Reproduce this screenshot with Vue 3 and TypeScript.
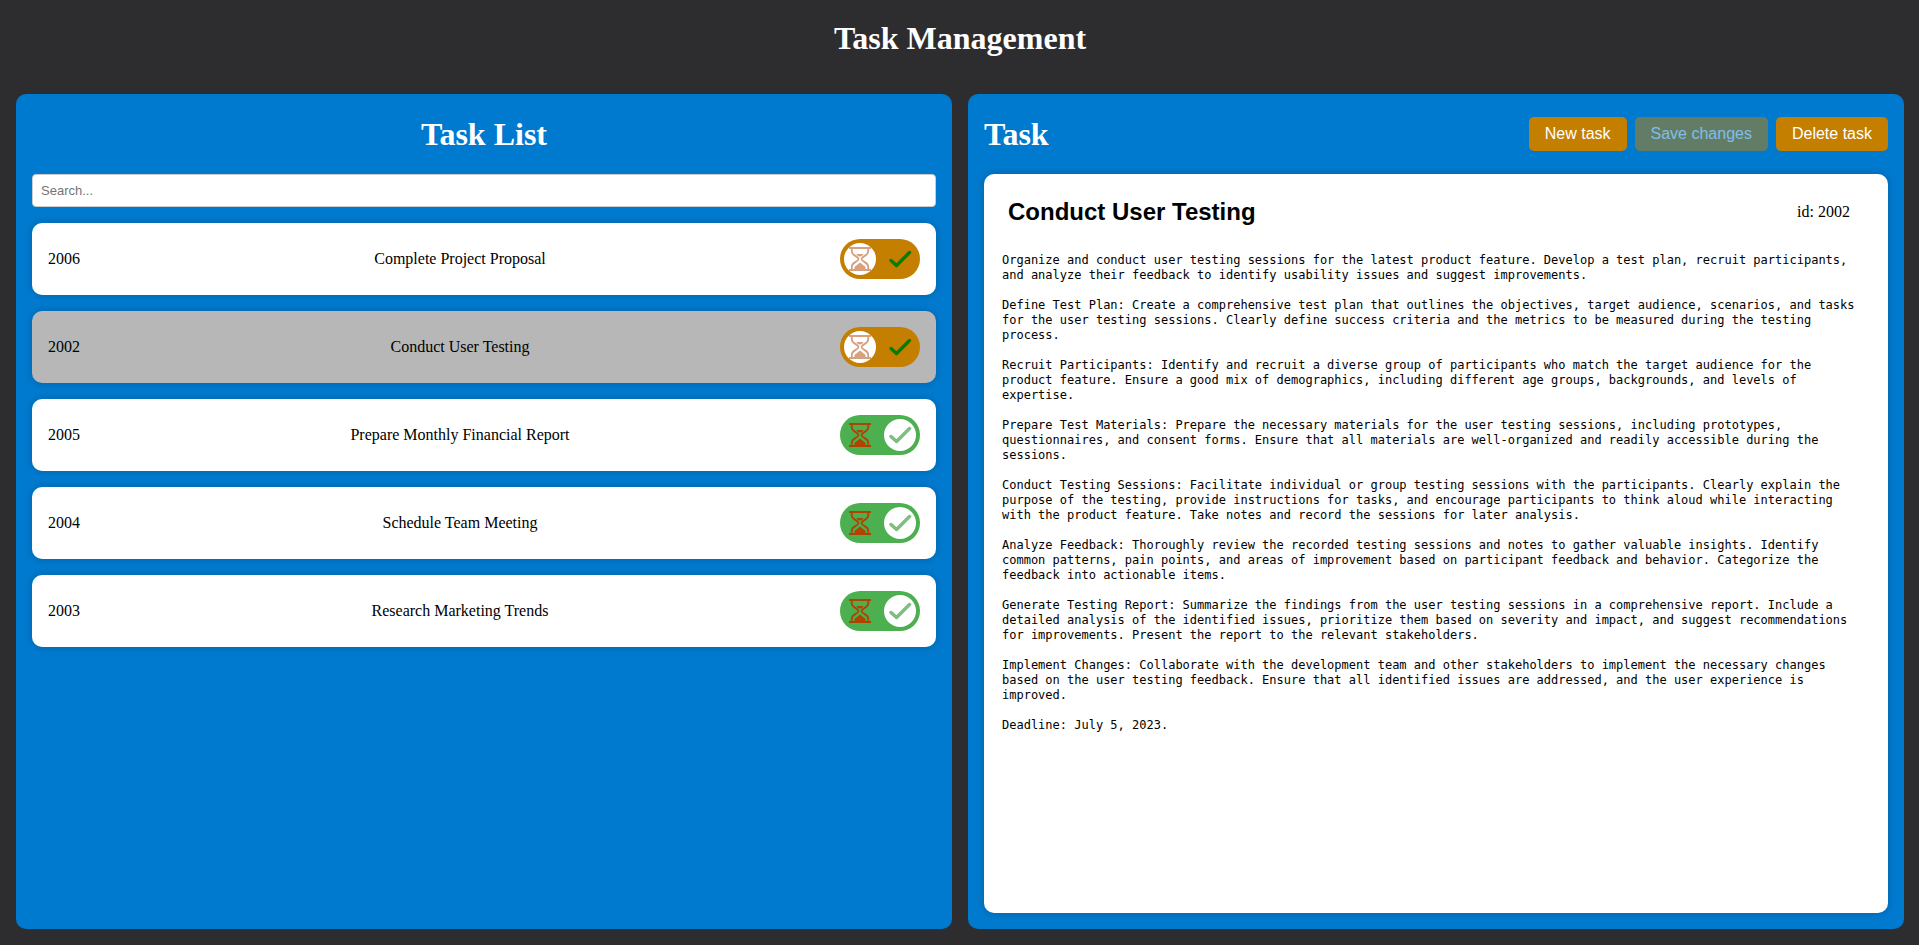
<script setup lang="ts">
import { computed, ref } from 'vue'

interface Task {
  id: number
  title: string
  done: boolean
  description: string
}

const tasks = ref<Task[]>([
  { id: 2006, title: 'Complete Project Proposal', done: false, description: '' },
  {
    id: 2002,
    title: 'Conduct User Testing',
    done: false,
    description: [
      'Organize and conduct user testing sessions for the latest product feature. Develop a test plan, recruit participants, and analyze their feedback to identify usability issues and suggest improvements.',
      'Define Test Plan: Create a comprehensive test plan that outlines the objectives, target audience, scenarios, and tasks for the user testing sessions. Clearly define success criteria and the metrics to be measured during the testing process.',
      'Recruit Participants: Identify and recruit a diverse group of participants who match the target audience for the product feature. Ensure a good mix of demographics, including different age groups, backgrounds, and levels of expertise.',
      'Prepare Test Materials: Prepare the necessary materials for the user testing sessions, including prototypes, questionnaires, and consent forms. Ensure that all materials are well-organized and readily accessible during the sessions.',
      'Conduct Testing Sessions: Facilitate individual or group testing sessions with the participants. Clearly explain the purpose of the testing, provide instructions for tasks, and encourage participants to think aloud while interacting with the product feature. Take notes and record the sessions for later analysis.',
      'Analyze Feedback: Thoroughly review the recorded testing sessions and notes to gather valuable insights. Identify common patterns, pain points, and areas of improvement based on participant feedback and behavior. Categorize the feedback into actionable items.',
      'Generate Testing Report: Summarize the findings from the user testing sessions in a comprehensive report. Include a detailed analysis of the identified issues, prioritize them based on severity and impact, and suggest recommendations for improvements. Present the report to the relevant stakeholders.',
      'Implement Changes: Collaborate with the development team and other stakeholders to implement the necessary changes based on the user testing feedback. Ensure that all identified issues are addressed, and the user experience is improved.',
      'Deadline: July 5, 2023.',
    ].join('\n\n'),
  },
  { id: 2005, title: 'Prepare Monthly Financial Report', done: true, description: '' },
  { id: 2004, title: 'Schedule Team Meeting', done: true, description: '' },
  { id: 2003, title: 'Research Marketing Trends', done: true, description: '' },
])

const search = ref('')
const selectedId = ref(2002)
const changed = ref(false)

const visibleTasks = computed(() =>
  tasks.value.filter((t) => t.title.toLowerCase().includes(search.value.toLowerCase())),
)
const selected = computed(() => tasks.value.find((t) => t.id === selectedId.value))

function select(id: number) {
  selectedId.value = id
  changed.value = false
}

function addTask() {
  const id = Math.max(2000, ...tasks.value.map((t) => t.id)) + 1
  tasks.value.unshift({ id, title: 'New task', done: false, description: '' })
  select(id)
}

function deleteTask() {
  tasks.value = tasks.value.filter((t) => t.id !== selectedId.value)
  if (tasks.value.length) select(tasks.value[0].id)
}
</script>

<template>
  <div class="app">
    <header class="app-header">
      <h1>Task Management</h1>
    </header>
    <main class="panels">
      <section class="panel">
        <div class="panel-header centered">
          <h2>Task List</h2>
        </div>
        <input v-model="search" class="search" type="search" placeholder="Search..." aria-label="Search tasks" />
        <ul class="task-list">
          <li
            v-for="task in visibleTasks"
            :key="task.id"
            class="task-card"
            :class="{ selected: task.id === selectedId }"
            @click="select(task.id)"
          >
            <span>{{ task.id }}</span>
            <span>{{ task.title }}</span>
            <label class="switch" @click.stop>
              <input v-model="task.done" type="checkbox" :aria-label="`${task.title} done`" />
              <span class="knob"></span>
              <svg class="icon hourglass" viewBox="0 0 24 24" aria-hidden="true">
                <path
                  d="M1 1h22M1 23h22M3.800 1v3.500c0 4.500 6.700 4.500 6.700 7.500s-6.700 3-6.700 7.500V23M20.200 1v3.500c0 4.500-6.700 4.500-6.700 7.500s6.700 3 6.700 7.500V23"
                  fill="none"
                  stroke="currentColor"
                  stroke-width="1.800"
                />
                <path d="M8.500 7h7q-1 2.200-3.500 2.500T8.500 7zM12 15.500l5.500 4.500v2.500h-11V20z" fill="currentColor" />
              </svg>
              <svg class="icon check" viewBox="0 0 24 24" aria-hidden="true">
                <path
                  d="M3 13.500l5.500 5L21.500 5.500"
                  fill="none"
                  stroke="currentColor"
                  stroke-width="3.400"
                  stroke-linecap="round"
                  stroke-linejoin="round"
                />
              </svg>
            </label>
          </li>
        </ul>
      </section>

      <section class="panel">
        <div class="panel-header">
          <h2>Task</h2>
          <div class="actions">
            <button type="button" @click="addTask">New task</button>
            <button type="button" :disabled="!changed" @click="changed = false">Save changes</button>
            <button type="button" @click="deleteTask">Delete task</button>
          </div>
        </div>
        <article v-if="selected" class="detail">
          <div class="detail-header">
            <input v-model="selected.title" class="detail-title" type="text" aria-label="Task title" @input="changed = true" />
            <span class="detail-id">id: {{ selected.id }}</span>
          </div>
          <textarea
            v-model="selected.description"
            class="description"
            aria-label="Task description"
            spellcheck="false"
            @input="changed = true"
          ></textarea>
        </article>
      </section>
    </main>
  </div>
</template>

<style>
body {
  margin: 0;
  background: #2d2d2f;
}
</style>

<style scoped>
.app,
.app * {
  box-sizing: border-box;
}
.app {
  display: flex;
  flex-direction: column;
  min-height: 100vh;
  padding: 16px 15px 16px 16px;
  background: #2d2d2f;
  color: #000;
  font: 16px/20px "Liberation Serif", "Times New Roman", serif;
}
h1,
h2 {
  margin: 0;
  color: #fff;
  font-size: 32px;
  line-height: 44px;
  font-weight: bold;
}
.app-header {
  padding-bottom: 34px;
  text-align: center;
}
.panels {
  flex: 1;
  display: grid;
  grid-template-columns: minmax(0, 1fr) minmax(0, 1fr);
  gap: 16px;
}
.panel {
  display: flex;
  flex-direction: column;
  padding: 0 16px 16px;
  border-radius: 10px;
  background: #007acf;
}
.panel-header {
  display: flex;
  align-items: center;
  justify-content: space-between;
  height: 80px;
}
.centered {
  justify-content: center;
}
.search {
  appearance: none;
  width: 100%;
  margin: 0;
  padding: 8px;
  border: 1px solid #ccc;
  border-radius: 4px;
  background: #fff;
  font: 13px/15px "Liberation Sans", Arial, sans-serif;
}
.search::placeholder {
  color: #757575;
}
.task-list {
  display: flex;
  flex-direction: column;
  gap: 16px;
  margin: 16px 0 0;
  padding: 0;
  list-style: none;
}
.task-card {
  display: flex;
  align-items: center;
  justify-content: space-between;
  padding: 16px;
  border-radius: 10px;
  background: #fff;
  box-shadow: 0 0 10px rgba(0, 0, 0, 0.2);
  cursor: pointer;
}
.task-card.selected {
  background: #b7b7b7;
}
.switch {
  position: relative;
  display: flex;
  align-items: center;
  justify-content: space-between;
  width: 80px;
  height: 40px;
  padding: 0 8px;
  border-radius: 20px;
  background: #c47f00;
  cursor: pointer;
}
.switch:has(input:checked) {
  background: #4caf50;
}
.switch input {
  position: absolute;
  inset: 0;
  margin: 0;
  opacity: 0;
}
.knob {
  position: absolute;
  top: 4px;
  left: 4px;
  width: 32px;
  height: 32px;
  border-radius: 50%;
  background: #fff;
}
input:checked ~ .knob {
  left: 44px;
}
.icon {
  position: relative;
  width: 24px;
  height: 24px;
}
.hourglass {
  color: #b04300;
  opacity: 0.5;
}
.check {
  color: #008000;
}
input:checked ~ .hourglass {
  opacity: 1;
}
input:checked ~ .check {
  opacity: 0.5;
}
.actions {
  display: flex;
  gap: 8px;
}
button {
  padding: 8px 16px;
  border: 0;
  border-radius: 5px;
  background: #c47f00;
  color: #fff;
  font: 16px/18px "Liberation Sans", Arial, sans-serif;
  cursor: pointer;
}
button:disabled {
  opacity: 0.5;
  cursor: default;
}
.detail {
  flex: 1;
  display: flex;
  flex-direction: column;
  gap: 16px;
  padding: 16px;
  border-radius: 10px;
  background: #fff;
  box-shadow: 0 0 10px rgba(0, 0, 0, 0.2);
}
.detail-header {
  display: flex;
  align-items: center;
  padding-right: 22px;
}
.detail-title {
  flex: 1;
  min-width: 0;
  padding: 8px;
  border: 0;
  background: transparent;
  color: #000;
  font: bold 24px/28px "Liberation Sans", Arial, sans-serif;
}
.description {
  flex: 1;
  padding: 3px 8px 3px 2px;
  border: 0;
  background: transparent;
  color: #000;
  font: 12px/15px "DejaVu Sans Mono", "Liberation Mono", monospace;
  resize: none;
}
</style>
